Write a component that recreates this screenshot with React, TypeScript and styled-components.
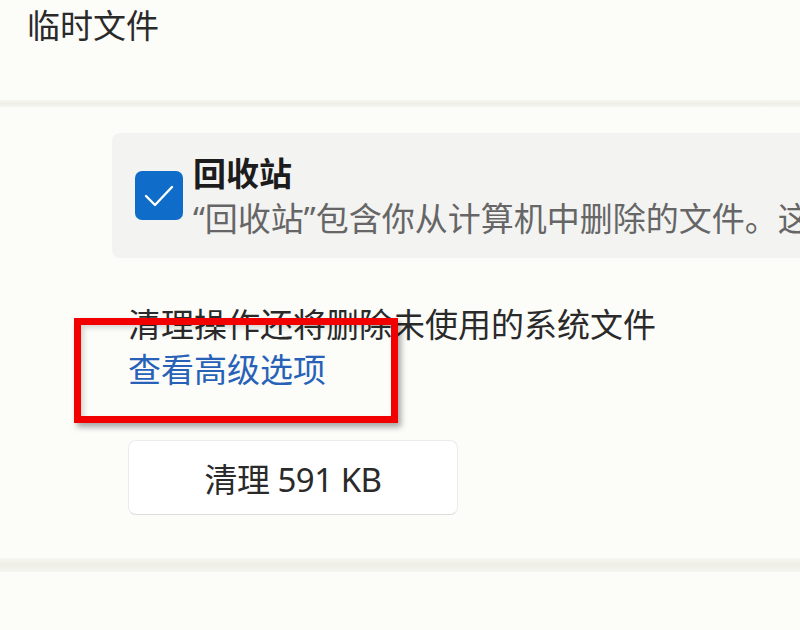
import styled, { createGlobalStyle } from "styled-components";

const GlobalStyle = createGlobalStyle`
  html, body {
    margin: 0;
    padding: 0;
    background: #fcfcf9;
  }
  body {
    font-family: "Noto Sans", "Noto Sans CJK SC", sans-serif;
    overflow: hidden;
  }
`;

const Page = styled.div`
  position: relative;
  width: 800px;
  height: 630px;
  overflow: hidden;
  background: #fcfcf9;
  color: #222;
`;

const Header = styled.header`
  height: 100px;
  padding-left: 27px;
  box-sizing: border-box;
`;

const Title = styled.h1`
  margin: 0;
  padding-top: 3px;
  font-size: 33px;
  line-height: 45px;
  font-weight: 400;
  color: #2a2a2a;
`;

const Separator = styled.div<{ $h: number }>`
  height: ${(p) => p.$h}px;
  background: linear-gradient(#f6f6f1, #eeeee6 50%, #f6f6f1);
`;

const Content = styled.section`
  padding: 26px 0 43px;
`;

const OptionCard = styled.div`
  margin-left: 112px;
  height: 125px;
  background: #f3f3f2;
  border-radius: 8px 0 0 8px;
  display: flex;
  align-items: center;
  gap: 10px;
  padding-left: 23px;
  overflow: hidden;
  white-space: nowrap;
`;

const CheckBox = styled.span`
  flex: none;
  width: 48px;
  height: 49px;
  border-radius: 7px;
  background: #0f6cc9;
  display: flex;
  align-items: center;
  justify-content: center;
`;

const OptionText = styled.div`
  display: flex;
  flex-direction: column;
  font-size: 33px;
  line-height: 45px;
`;

const OptionName = styled.span`
  font-weight: 700;
  color: #1c1c1c;
`;

const OptionDesc = styled.span`
  color: #666;
`;

const Note = styled.div`
  margin: 44px 0 0 128px;
  font-size: 33px;
  line-height: 45px;
`;

const NoteText = styled.p`
  margin: 0;
  color: #2a2a2a;
`;

const Link = styled.a`
  display: block;
  color: #2762b8;
  text-decoration: none;
`;

const CleanButton = styled.button`
  margin: 48px 0 0 128px;
  width: 330px;
  height: 75px;
  background: #fff;
  border: 1px solid #ececec;
  border-bottom-color: #dcdcdc;
  border-radius: 8px;
  font-family: inherit;
  font-size: 33px;
  color: #2a2a2a;
  display: flex;
  align-items: center;
  justify-content: center;
  letter-spacing: -0.5px;
`;

const Highlight = styled.div`
  position: absolute;
  left: 74px;
  top: 318px;
  width: 324px;
  height: 105px;
  box-sizing: border-box;
  border: 7px solid #f20000;
  box-shadow: 3px 4px 6px rgba(0, 0, 0, 0.35),
    inset 3px 3px 5px rgba(0, 0, 0, 0.15);
  pointer-events: none;
`;

const Footer = styled.div`
  height: 60px;
`;

export default function App() {
  return (
    <Page>
      <GlobalStyle />
      <Header>
        <Title>临时文件</Title>
      </Header>
      <Separator $h={7} />
      <Content>
        <OptionCard>
          <CheckBox>
            <svg width="30" height="24" viewBox="0 0 30 24" fill="none">
              <path
                d="M2 12 L11 21 L28 3"
                stroke="#fff"
                strokeWidth="2.4"
                strokeLinecap="round"
                strokeLinejoin="round"
              />
            </svg>
          </CheckBox>
          <OptionText>
            <OptionName>回收站</OptionName>
            <OptionDesc>
              “回收站”包含你从计算机中删除的文件。这些文件在清空回收站之前不会被永久删除。
            </OptionDesc>
          </OptionText>
        </OptionCard>
        <Note>
          <NoteText>清理操作还将删除未使用的系统文件</NoteText>
          <Link href="#">查看高级选项</Link>
        </Note>
        <CleanButton>清理 591 KB</CleanButton>
      </Content>
      <Separator $h={14} />
      <Footer />
      <Highlight />
    </Page>
  );
}
